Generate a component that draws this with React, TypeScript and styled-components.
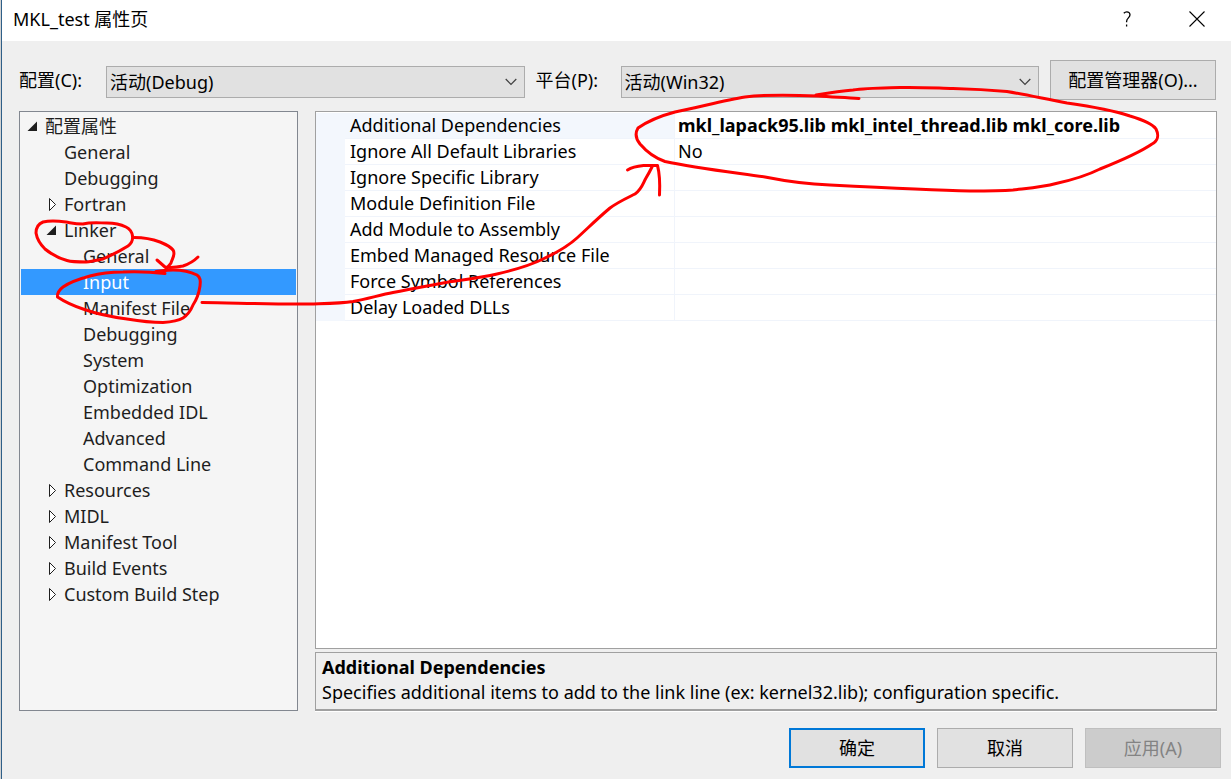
import React from "react";
import styled, { createGlobalStyle } from "styled-components";

const GlobalStyle = createGlobalStyle`
  *, *::before, *::after { box-sizing: border-box; }
  body {
    margin: 0;
    background: #d2d2d2;
    color: #000;
    font-family: "Noto Sans", "Noto Sans CJK SC", sans-serif;
    font-size: 18px;
    line-height: 26px;
  }
  button, select { font: inherit; color: inherit; }
`;

const Dialog = styled.div`
  position: relative;
  display: flex;
  flex-direction: column;
  min-height: 100vh;
  margin-left: 1px;
  border-left: 1px solid #2f5f88;
  background: #efefef;
  overflow: hidden;
`;

const TitleBar = styled.header`
  display: flex;
  align-items: center;
  height: 41px;
  padding: 0 4px 4px 11px;
  background: #fff;
`;

const Title = styled.h1`
  flex: 1;
  margin: 0;
  font-size: 18px;
  font-weight: 400;
`;

const CaptionButton = styled.button`
  display: flex;
  align-items: center;
  justify-content: center;
  width: 61px;
  height: 36px;
  margin-left: 9px;
  padding: 0;
  border: 0;
  background: transparent;
`;

const Toolbar = styled.div`
  display: flex;
  align-items: center;
  padding: 19px 15px 11px 17px;
`;

const FieldLabel = styled.label<{ $width: number }>`
  flex: none;
  width: ${(p) => p.$width}px;
`;

const SelectBox = styled.div`
  position: relative;
  flex: 1;
  margin: 4px 11px 0 0;

  svg {
    position: absolute;
    right: 8px;
    top: 12px;
    pointer-events: none;
  }
`;

const Select = styled.select`
  display: block;
  width: 100%;
  height: 32px;
  padding: 0 28px 0 3px;
  border: 1px solid #acacac;
  border-radius: 0;
  background: #e1e1e1;
  appearance: none;
`;

const PushButton = styled.button<{ $primary?: boolean; $width: number }>`
  flex: none;
  width: ${(p) => p.$width}px;
  height: 40px;
  padding: 0;
  border: ${(p) => (p.$primary ? "2px solid #0078d7" : "1px solid #acacac")};
  border-radius: 0;
  background: #e1e1e1;

  &:disabled {
    border-color: #bfbfbf;
    background: #cccccc;
    color: #838383;
  }
`;

const Content = styled.main`
  display: flex;
  flex: 1;
  gap: 17px;
  padding: 0 14px 0 17px;
`;

const Tree = styled.ul`
  flex: none;
  width: 279px;
  margin: 0;
  padding: 1px;
  border: 1px solid #828790;
  background: #f5f5f5;
  color: #1e1e1e;
  list-style: none;
`;

const TreeRow = styled.li<{ $level: number; $selected: boolean }>`
  display: flex;
  align-items: center;
  height: 26px;
  padding-left: ${(p) => 5 + p.$level * 19}px;
  background: ${(p) => (p.$selected ? "#3399ff" : "transparent")};
  color: ${(p) => (p.$selected ? "#fff" : "inherit")};
`;

const Twisty = styled.span`
  display: flex;
  flex: none;
  width: 19px;
`;

const Details = styled.div`
  display: flex;
  flex: 1;
  flex-direction: column;
  gap: 3px;
  min-width: 0;
`;

const GridPane = styled.section`
  flex: 1;
  padding-top: 1px;
  border: 1px solid #a0a0a0;
  background: #fff;
`;

const PropertyTable = styled.table`
  width: 100%;
  border-collapse: separate;
  border-spacing: 0;
  table-layout: fixed;
`;

const GutterCell = styled.td`
  width: 29px;
  padding: 0;
  background: #f3f7fd;
`;

const NameCell = styled.th<{ $selected: boolean }>`
  width: 330px;
  height: 26px;
  padding: 0 0 0 5px;
  border-right: 1px solid #f0f4fb;
  border-bottom: 1px solid #f0f4fb;
  background: ${(p) => (p.$selected ? "#f3f7fd" : "#fff")};
  font-weight: 400;
  line-height: 25px;
  text-align: left;
  white-space: nowrap;
`;

const ValueCell = styled.td<{ $bold: boolean }>`
  padding: 0 0 0 3px;
  border-bottom: 1px solid #f0f4fb;
  font-weight: ${(p) => (p.$bold ? 700 : 400)};
  line-height: 25px;
  white-space: nowrap;
`;

const Description = styled.section`
  flex: none;
  height: 59px;
  padding: 2px 6px;
  border: 1px solid #a0a0a0;
  border-bottom-width: 2px;
  box-shadow: 0 1px 0 #fff;
  line-height: 25px;
`;

const DescriptionTitle = styled.h2`
  margin: 0;
  font-size: 18px;
  font-weight: 700;
`;

const DescriptionText = styled.p`
  margin: 0;
`;

const Footer = styled.footer`
  display: flex;
  justify-content: flex-end;
  gap: 12px;
  padding: 17px 10px 11px;
`;

const Ink = styled.svg`
  position: absolute;
  top: 0;
  left: -2px;
  pointer-events: none;
`;

type Node = { label: string; level: number; state?: "open" | "closed"; selected?: boolean };

const nodes: Node[] = [
  { label: "配置属性", level: 0, state: "open" },
  { label: "General", level: 1 },
  { label: "Debugging", level: 1 },
  { label: "Fortran", level: 1, state: "closed" },
  { label: "Linker", level: 1, state: "open" },
  { label: "General", level: 2 },
  { label: "Input", level: 2, selected: true },
  { label: "Manifest File", level: 2 },
  { label: "Debugging", level: 2 },
  { label: "System", level: 2 },
  { label: "Optimization", level: 2 },
  { label: "Embedded IDL", level: 2 },
  { label: "Advanced", level: 2 },
  { label: "Command Line", level: 2 },
  { label: "Resources", level: 1, state: "closed" },
  { label: "MIDL", level: 1, state: "closed" },
  { label: "Manifest Tool", level: 1, state: "closed" },
  { label: "Build Events", level: 1, state: "closed" },
  { label: "Custom Build Step", level: 1, state: "closed" },
];

const properties = [
  { name: "Additional Dependencies", value: "mkl_lapack95.lib mkl_intel_thread.lib mkl_core.lib", bold: true },
  { name: "Ignore All Default Libraries", value: "No" },
  { name: "Ignore Specific Library", value: "" },
  { name: "Module Definition File", value: "" },
  { name: "Add Module to Assembly", value: "" },
  { name: "Embed Managed Resource File", value: "" },
  { name: "Force Symbol References", value: "" },
  { name: "Delay Loaded DLLs", value: "" },
];

const strokes = [
  // loop round the dependency values
  "M859 98.500C845 97.500 832 97 818 96C795 95 765 94.500 745 97C725 100 700 107 675 112C660 116 648 121 638 128C635 133 636 139 640 144C646 151 655 158 665 161.500C695 168 730 172 765 177C785 181 805 184 830 185C870 187 930 190 970 191C985 191 1000 191 1013 190C1030 188 1043 187 1056 183.500C1072 180 1086 176 1100 169C1120 161 1139 153 1152 144C1158 141 1159 135 1156 129C1152 123 1140 119 1130 116C1109 109 1088 106 1067 103C1045 99 1028 95 1007 91.500C990 90 972 89 953 88.500C935 88 918 87 900 87.500C882 88 866 88 853 90C840 91 828 93 816 95",
  // loop round Linker
  "M83 224C75 224 72 223 66 222C58 221 50 220.500 43 222C38 224 36 228 36 233C37 239 40 244 45 249C51 254 58 258 67 260.500C72 262 78 262 86 262C92 261.500 98 260 103 259C112 255 120 251 128 246C132 243 133 240 132.500 236C132 232 130 229 126 227C120 224 114 223 107 223C99 223 91 222 83 224",
  // small arrow down to Input
  "M134.500 237.500C143 237.500 152 239 160 242C165 244 170 246 173 250C176 254 172 259 171 263C169 266 166 268 165 271",
  "M157 260L165 267C171 268 178 267 183 266C189 264 194 261 198 257",
  // loop round Input
  "M165 273.500C152 272 137 271.500 123 272C111 272 101 273 90 276C79 279 70 282 63 287C59 290 57 293 57.500 297C65 302 74 306 83 309C97 314 112 317 127 319C139 321 151 322.500 163 322.500C171 322 178 321 183 318C189 314 191 310 193 305C197 299 199 293 200 286C201 280 200 277 197 275C191 272 182 270 173 270C167 270 161 271 156 271.500",
  // long arrow up to the values
  "M202 302.500C238 303 275 304.500 310 304C325 303.500 340 303.500 353 301.500C367 299 380 295 393 292.500C410 289 427 286 443 283C462 280 480 278 497 274C514 270 529 266 543 259C556 253 567 247 577 238C588 228 598 218 610 208C618 202 627 198 635 194C642 189 643 183 646 178C649 173 650 171 652 167",
  "M627.500 170C633 166.500 639 166 644 165.500L657.500 165.500C660 175 660 185 659.500 195",
];

function TwistyIcon({ state }: { state: "open" | "closed" }) {
  return (
    <svg width="12" height="14" viewBox="0 0 12 14" aria-hidden="true">
      {state === "open" ? (
        <path d="M11 2.500V12H1.500Z" fill="#1e1e1e" />
      ) : (
        <path d="M4.500 1.500L10.500 7.500L4.500 13.500Z" fill="#fff" stroke="#1e1e1e" strokeWidth="1" />
      )}
    </svg>
  );
}

function Chevron() {
  return (
    <svg width="12" height="8" viewBox="0 0 12 8" fill="none" stroke="#404040" strokeWidth="1.2" aria-hidden="true">
      <path d="M0.700 1L6 6.300L11.300 1" />
    </svg>
  );
}

export default function App() {
  return (
    <>
      <GlobalStyle />
      <Dialog>
        <TitleBar>
          <Title>MKL_test 属性页</Title>
          <CaptionButton aria-label="Help">
            <svg width="8" height="16" viewBox="0 0 8 16" fill="none" stroke="#000" strokeWidth="1.3">
              <path d="M0.800 2.200C1.800 1.100 2.700 0.800 3.800 0.800C5.800 0.800 7 2 7 3.800C7 6.800 3.600 7 3.600 10.400V11.200M3.600 13.600V15.400" />
            </svg>
          </CaptionButton>
          <CaptionButton aria-label="Close">
            <svg width="16" height="16" viewBox="0 0 16 16" fill="none" stroke="#000" strokeWidth="1.1">
              <path d="M0.500 0.500L15.500 15.500M15.500 0.500L0.500 15.500" />
            </svg>
          </CaptionButton>
        </TitleBar>

        <Toolbar>
          <FieldLabel htmlFor="configuration" $width={87}>配置(C):</FieldLabel>
          <SelectBox>
            <Select id="configuration">
              <option>活动(Debug)</option>
            </Select>
            <Chevron />
          </SelectBox>
          <FieldLabel htmlFor="platform" $width={85}>平台(P):</FieldLabel>
          <SelectBox>
            <Select id="platform">
              <option>活动(Win32)</option>
            </Select>
            <Chevron />
          </SelectBox>
          <PushButton $width={166}>配置管理器(O)...</PushButton>
        </Toolbar>

        <Content>
          <Tree role="tree">
            {nodes.map((n, i) => (
              <TreeRow
                key={i}
                role="treeitem"
                aria-level={n.level + 1}
                aria-selected={!!n.selected}
                aria-expanded={n.state ? n.state === "open" : undefined}
                $level={n.level}
                $selected={!!n.selected}
              >
                <Twisty>{n.state && <TwistyIcon state={n.state} />}</Twisty>
                {n.label}
              </TreeRow>
            ))}
          </Tree>

          <Details>
            <GridPane>
              <PropertyTable>
                <tbody>
                  {properties.map((p, i) => (
                    <tr key={p.name}>
                      <GutterCell />
                      <NameCell scope="row" $selected={i === 0}>{p.name}</NameCell>
                      <ValueCell $bold={!!p.bold}>{p.value}</ValueCell>
                    </tr>
                  ))}
                </tbody>
              </PropertyTable>
            </GridPane>
            <Description>
              <DescriptionTitle>Additional Dependencies</DescriptionTitle>
              <DescriptionText>
                Specifies additional items to add to the link line (ex: kernel32.lib); configuration specific.
              </DescriptionText>
            </Description>
          </Details>
        </Content>

        <Footer>
          <PushButton $width={136} $primary>确定</PushButton>
          <PushButton $width={136}>取消</PushButton>
          <PushButton $width={136} disabled>应用(A)</PushButton>
        </Footer>

        <Ink width="1231" height="779" viewBox="0 0 1231 779" fill="none" stroke="#ff0000" strokeWidth="3" strokeLinecap="round" strokeLinejoin="round" aria-hidden="true">
          {strokes.map((d) => (
            <path key={d} d={d} />
          ))}
        </Ink>
      </Dialog>
    </>
  );
}
